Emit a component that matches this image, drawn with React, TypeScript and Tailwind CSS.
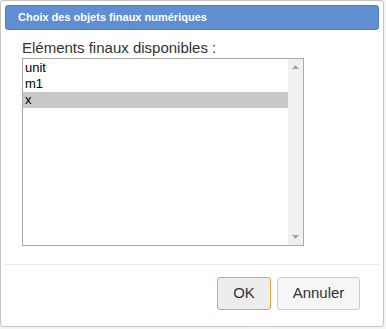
import React from "react";

const items = ["unit", "m1", "x"];

export default function App() {
  return (
    <div className="h-[329px] w-[386px] bg-[#f4f4f4] font-['Liberation_Sans',Arial,sans-serif]">
      <div className="flex h-[327px] w-[384px] flex-col rounded-[3px] border border-[#c5c5c5] bg-white p-[4px]">
        <div className="flex h-[25px] items-center rounded-[3px] border border-[#4c7fcb] bg-[#5f8fd2] pl-[12px] text-[11px] font-bold text-white">
          Choix des objets finaux numériques
        </div>
        <div className="px-[17px] pt-[9px]">
          <div className="text-[15px] leading-[18px] text-[#333]">Eléments finaux disponibles :</div>
          <div className="mt-[1px] flex h-[188px] w-[282px] border border-[#a9a9a9]">
            <div className="flex-1 pt-[1px]">
              {items.map((it) => (
                <div
                  key={it}
                  className={`h-[16px] pl-[2px] text-[13px] leading-[16px] text-black ${it === "x" ? "bg-[#c8c8c8]" : ""}`}
                >
                  {it}
                </div>
              ))}
            </div>
            <div className="flex w-[15px] flex-col items-center justify-between bg-[#f0f0f0] py-[6px]">
              <svg width="7" height="4" viewBox="0 0 7 4">
                <path d="M0 4 L3.5 0 L7 4 Z" fill="#a3a3a3" />
              </svg>
              <svg width="7" height="4" viewBox="0 0 7 4">
                <path d="M0 0 L3.5 4 L7 0 Z" fill="#a3a3a3" />
              </svg>
            </div>
          </div>
        </div>
        <div className="mt-[18px] border-t border-[#e5e5e5]" />
        <div className="flex justify-end gap-[6px] pr-[19px] pt-[12px]">
          <button className="h-[33px] w-[54px] rounded-[3px] border border-[#e9a43a] bg-[#ededed] text-[15px] text-[#333]">
            OK
          </button>
          <button className="h-[33px] w-[83px] rounded-[3px] border border-[#cfcfcf] bg-[#f6f6f6] text-[15px] text-[#333]">
            Annuler
          </button>
        </div>
      </div>
    </div>
  );
}
